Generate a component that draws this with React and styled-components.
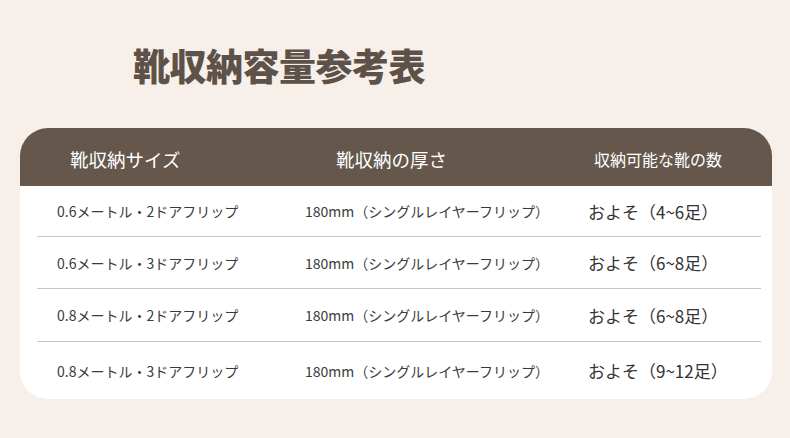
import React from "react";
import styled, { createGlobalStyle } from "styled-components";

const GlobalStyle = createGlobalStyle`
  html, body {
    margin: 0;
    padding: 0;
    background: #f6efea;
  }
  body {
    font-family: "Noto Sans CJK JP", "Noto Sans", sans-serif;
  }
`;

const Page = styled.div`
  width: 790px;
  height: 438px;
  overflow: hidden;
  background: #f6efea;
  padding-top: 40px;
  box-sizing: border-box;
`;

const Title = styled.h1`
  margin: 0 0 0 133px;
  height: 88px;
  font-size: 37px;
  line-height: 50px;
  font-weight: 900;
  color: #5e5248;
  letter-spacing: -0.5px;
`;

const Card = styled.div`
  margin: 0 18px 0 20px;
  background: #ffffff;
  border-radius: 28px;
  overflow: hidden;
`;

const Grid = `
  display: grid;
  grid-template-columns: 248px 283px 1fr;
  align-items: center;
`;

const HeaderRow = styled.div`
  ${Grid}
  height: 58px;
  background: #65574c;
  color: #ffffff;
  padding-left: 50px;
`;

const HeaderCell = styled.div`
  font-size: ${(p) => p.$size || 18.5}px;
  margin-left: ${(p) => p.$indent || 0}px;
  padding-top: 4px;
`;

const Row = styled.div`
  ${Grid}
  height: ${(p) => p.$h}px;
  margin: 0 11px 0 17px;
  padding-left: 20px;
  border-bottom: ${(p) => (p.$last ? "none" : "1px solid #c6c6c6")};
  color: #3b3b3b;
`;

const Size = styled.div`
  font-size: 14px;
`;

const Thick = styled.div`
  font-size: 14px;
`;

const Count = styled.div`
  font-size: 17px;
  color: #333;
`;

const rows = [
  { size: "0.6メートル・2ドアフリップ", count: "およそ（4~6足）", h: 50 },
  { size: "0.6メートル・3ドアフリップ", count: "およそ（6~8足）", h: 51 },
  { size: "0.8メートル・2ドアフリップ", count: "およそ（6~8足）", h: 52 },
  { size: "0.8メートル・3ドアフリップ", count: "およそ（9~12足）", h: 57 },
];

const App = () => (
  <Page>
    <GlobalStyle />
    <Title>靴収納容量参考表</Title>
    <Card>
      <HeaderRow>
        <HeaderCell>靴収納サイズ</HeaderCell>
        <HeaderCell $indent={18}>靴収納の厚さ</HeaderCell>
        <HeaderCell $size={16} $indent={-7}>
          収納可能な靴の数
        </HeaderCell>
      </HeaderRow>
      {rows.map((r, i) => (
        <Row key={i} $h={r.h} $last={i === rows.length - 1}>
          <Size>{r.size}</Size>
          <Thick>180mm（シングルレイヤーフリップ）</Thick>
          <Count>{r.count}</Count>
        </Row>
      ))}
    </Card>
  </Page>
);

export default App;
